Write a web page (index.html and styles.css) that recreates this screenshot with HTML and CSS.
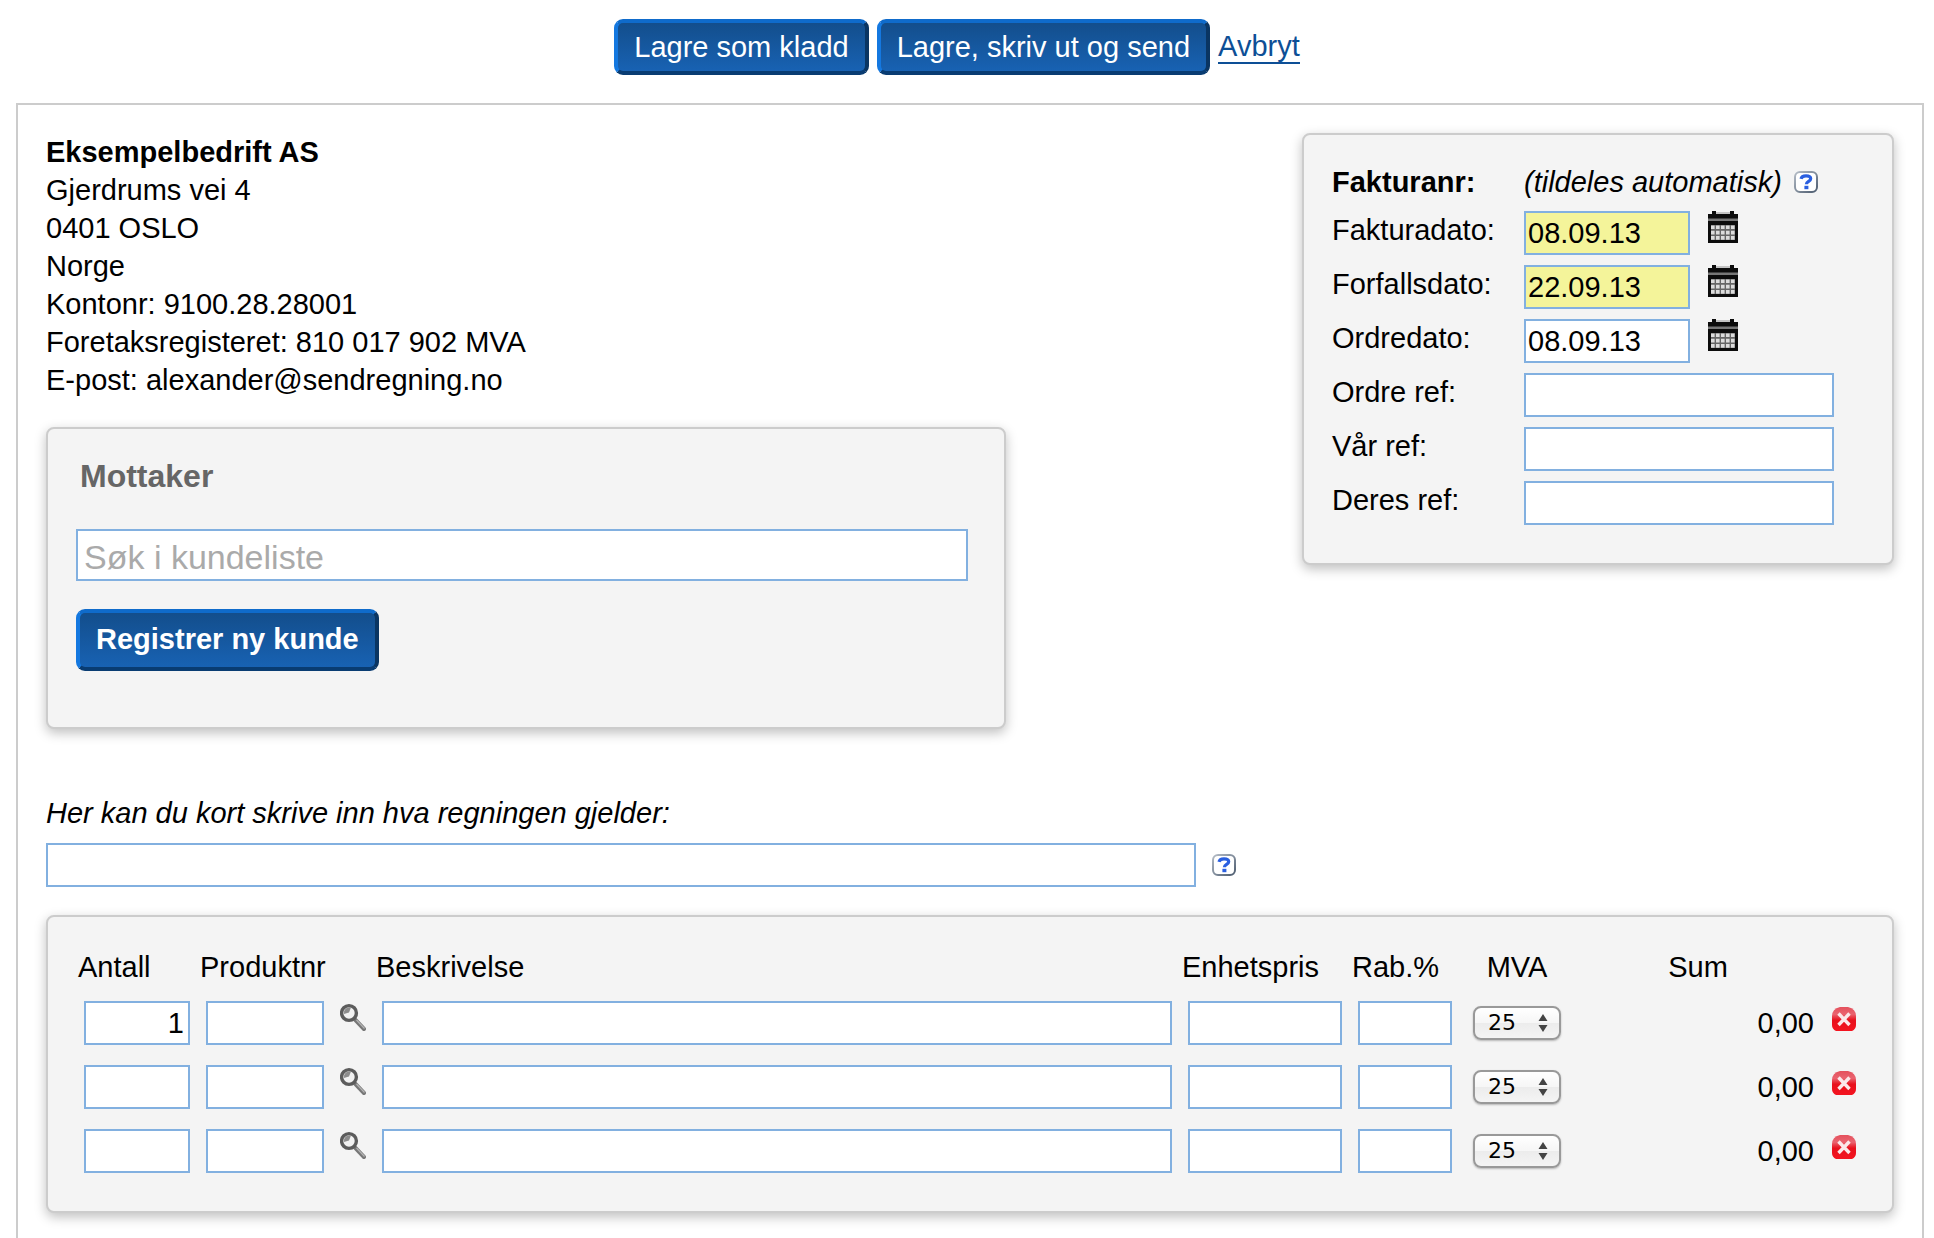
FILE: index.html
```html
<!DOCTYPE html>
<html lang="no">
<head>
<meta charset="utf-8">
<title>Ny faktura</title>
<link rel="stylesheet" href="styles.css">
</head>
<body>
<svg class="defs" width="0" height="0" aria-hidden="true">
  <defs>
    <linearGradient id="g-red" x1="0" y1="0" x2="0" y2="1">
      <stop offset="0" stop-color="#e4505c"/><stop offset=".3" stop-color="#ea6470"/><stop offset=".55" stop-color="#e8101c"/><stop offset="1" stop-color="#f41420"/>
    </linearGradient>
    <linearGradient id="g-help" x1="0" y1="0" x2="1" y2="1">
      <stop offset="0" stop-color="#b4bcc6"/><stop offset="1" stop-color="#4e5d70"/>
    </linearGradient>
    <symbol id="i-help" viewBox="0 0 24 22">
      <rect x="1" y="1" width="22" height="20" rx="5" fill="#fff" stroke="url(#g-help)" stroke-width="2"/>
      <path d="M7 7.800C7.500 5.400 9.500 4.800 12 4.800c2.800 0 4.700 1 4.700 3 0 2.700-4.300 2.500-4.300 5.400" fill="none" stroke="#2a5fe0" stroke-width="3.200"/>
      <rect x="10.400" y="14.800" width="4" height="3.400" fill="#2a5fe0"/>
    </symbol>
    <symbol id="i-cal" viewBox="0 0 30 32">
      <path d="M0 3h4V0h4v3h14V0h4v3h4v29H0z" fill="#0c0c0c"/>
      <path d="M8 1h14v2H8z" fill="#c4c4c4"/>
      <path d="M0 7.500h30v2.500H0z" fill="#777"/>
      <path d="M3 14h24v15H3z" fill="#666"/>
      <g fill="#dcdcdc"><path id="cal-row" d="M3 14.500h3.600v3.600H3zM8 14.500h3.600v3.600H8zM13 14.500h3.600v3.600H13zM18 14.500h3.600v3.600H18zM23 14.500h3.600v3.600H23z"/><use href="#cal-row" y="5.300"/><use href="#cal-row" y="10.600"/></g>
    </symbol>
    <symbol id="i-search" viewBox="0 0 26 28">
      <path d="M15 16.500l9 9.500" stroke="#777" stroke-width="4" stroke-linecap="round"/>
      <path d="M16.500 17l8 8.500" stroke="#b4b4b4" stroke-width="1.200"/>
      <circle cx="9" cy="10" r="7.400" fill="#f2f2f2" stroke="#5c5c5c" stroke-width="3.400"/>
      <path d="M4 11a5.500 5.500 0 0 1 7-6.500L9 9.500z" fill="#8c8c8c"/>
    </symbol>
    <symbol id="i-del" viewBox="0 0 24 24">
      <path d="M8 0h8q8 2 8 9v9q0 4-4 6H4q-4-2-4-6V9Q0 2 8 0z" fill="url(#g-red)"/>
      <path d="M6.500 6.500l11 11.500M17.500 6.500l-11 11.500" stroke="#fbe8ea" stroke-width="3.400"/>
    </symbol>
  </defs>
</svg>

<form class="invoice-form">
  <div class="toolbar">
    <button type="button" class="btn">Lagre som kladd</button>
    <button type="button" class="btn">Lagre, skriv ut og send</button>
    <a class="cancel" href="#">Avbryt</a>
  </div>

  <main class="invoice">
    <div class="top">
      <div class="sender-col">
        <address class="sender">
          <strong>Eksempelbedrift AS</strong><br>
          Gjerdrums vei 4<br>
          0401 OSLO<br>
          Norge<br>
          Kontonr: 9100.28.28001<br>
          Foretaksregisteret: 810 017 902 MVA<br>
          E-post: alexander@sendregning.no
        </address>
        <section class="panel recipient">
          <h2>Mottaker</h2>
          <input class="field search" type="text" placeholder="Søk i kundeliste" aria-label="Søk i kundeliste">
          <button type="button" class="btn btn-strong">Registrer ny kunde</button>
        </section>
      </div>

      <section class="panel details">
        <strong>Fakturanr:</strong>
        <div class="value"><em>(tildeles automatisk)</em><button type="button" class="icon-btn" aria-label="Hjelp"><svg width="24" height="22"><use href="#i-help"/></svg></button></div>
        <label for="fakturadato">Fakturadato:</label>
        <div class="value date"><input class="field required" id="fakturadato" type="text" value="08.09.13"><button type="button" class="icon-btn" aria-label="Velg dato"><svg width="30" height="32"><use href="#i-cal"/></svg></button></div>
        <label for="forfallsdato">Forfallsdato:</label>
        <div class="value date"><input class="field required" id="forfallsdato" type="text" value="22.09.13"><button type="button" class="icon-btn" aria-label="Velg dato"><svg width="30" height="32"><use href="#i-cal"/></svg></button></div>
        <label for="ordredato">Ordredato:</label>
        <div class="value date"><input class="field" id="ordredato" type="text" value="08.09.13"><button type="button" class="icon-btn" aria-label="Velg dato"><svg width="30" height="32"><use href="#i-cal"/></svg></button></div>
        <label for="ordreref">Ordre ref:</label>
        <input class="field ref" id="ordreref" type="text">
        <label for="varref">Vår ref:</label>
        <input class="field ref" id="varref" type="text">
        <label for="deresref">Deres ref:</label>
        <input class="field ref" id="deresref" type="text">
      </section>
    </div>

    <div class="subject">
      <label for="gjelder">Her kan du kort skrive inn hva regningen gjelder:</label>
      <div class="subject-row">
        <input class="field" id="gjelder" type="text">
        <button type="button" class="icon-btn" aria-label="Hjelp"><svg width="24" height="22"><use href="#i-help"/></svg></button>
      </div>
    </div>

    <section class="panel lines">
      <table>
        <colgroup>
          <col class="c-qty"><col class="c-prod"><col class="c-find"><col><col class="c-price"><col class="c-disc"><col class="c-vat"><col class="c-sum"><col class="c-del">
        </colgroup>
        <thead>
          <tr><th>Antall</th><th colspan="2">Produktnr</th><th>Beskrivelse</th><th>Enhetspris</th><th>Rab.%</th><th class="mid">MVA</th><th class="mid">Sum</th><th></th></tr>
        </thead>
        <tbody>
          <tr>
            <td><input class="field num" type="text" value="1" aria-label="Antall"></td>
            <td><input class="field" type="text" aria-label="Produktnr"></td>
            <td class="find"><button type="button" class="icon-btn" aria-label="Søk produkt"><svg width="26" height="28"><use href="#i-search"/></svg></button></td>
            <td><input class="field" type="text" aria-label="Beskrivelse"></td>
            <td><input class="field num" type="text" aria-label="Enhetspris"></td>
            <td><input class="field num" type="text" aria-label="Rabatt i prosent"></td>
            <td><span class="select"><select aria-label="MVA"><option>25</option></select><svg width="10" height="18"><path d="M5 0l4.500 7h-9zM5 18l4.500-7h-9z" fill="#444"/></svg></span></td>
            <td class="sum">0,00</td>
            <td class="del"><button type="button" class="icon-btn" aria-label="Slett linje"><svg width="24" height="24"><use href="#i-del"/></svg></button></td>
          </tr>
          <tr>
            <td><input class="field num" type="text" aria-label="Antall"></td>
            <td><input class="field" type="text" aria-label="Produktnr"></td>
            <td class="find"><button type="button" class="icon-btn" aria-label="Søk produkt"><svg width="26" height="28"><use href="#i-search"/></svg></button></td>
            <td><input class="field" type="text" aria-label="Beskrivelse"></td>
            <td><input class="field num" type="text" aria-label="Enhetspris"></td>
            <td><input class="field num" type="text" aria-label="Rabatt i prosent"></td>
            <td><span class="select"><select aria-label="MVA"><option>25</option></select><svg width="10" height="18"><path d="M5 0l4.500 7h-9zM5 18l4.500-7h-9z" fill="#444"/></svg></span></td>
            <td class="sum">0,00</td>
            <td class="del"><button type="button" class="icon-btn" aria-label="Slett linje"><svg width="24" height="24"><use href="#i-del"/></svg></button></td>
          </tr>
          <tr>
            <td><input class="field num" type="text" aria-label="Antall"></td>
            <td><input class="field" type="text" aria-label="Produktnr"></td>
            <td class="find"><button type="button" class="icon-btn" aria-label="Søk produkt"><svg width="26" height="28"><use href="#i-search"/></svg></button></td>
            <td><input class="field" type="text" aria-label="Beskrivelse"></td>
            <td><input class="field num" type="text" aria-label="Enhetspris"></td>
            <td><input class="field num" type="text" aria-label="Rabatt i prosent"></td>
            <td><span class="select"><select aria-label="MVA"><option>25</option></select><svg width="10" height="18"><path d="M5 0l4.500 7h-9zM5 18l4.500-7h-9z" fill="#444"/></svg></span></td>
            <td class="sum">0,00</td>
            <td class="del"><button type="button" class="icon-btn" aria-label="Slett linje"><svg width="24" height="24"><use href="#i-del"/></svg></button></td>
          </tr>
        </tbody>
      </table>
    </section>
  </main>
</form>
</body>
</html>
```
FILE: styles.css
```css
* {
  box-sizing: border-box;
}

html,
body {
  height: 100%;
}

body {
  margin: 0;
  background: #fff;
  color: #000;
  font-family: "Liberation Sans", Arial, sans-serif;
  font-size: 29px;
  line-height: 38px;
}

button,
input,
select {
  margin: 0;
  font: inherit;
}

.defs {
  display: block;
}

.invoice-form {
  display: flex;
  flex-direction: column;
  min-height: 100%;
}

/* Actions */

.toolbar {
  display: flex;
  justify-content: center;
  align-items: center;
  gap: 8px;
  padding: 19px 20px 28px 0;
}

.btn {
  padding: 5px 16px;
  border: 4px solid;
  border-color: #0f6bcb #0a3562 #093c72 #1478e0;
  border-radius: 9px;
  background: linear-gradient(#134e8c, #1862b3);
  color: #fff;
  white-space: nowrap;
}

.btn-strong {
  padding: 7px 16px 9px;
  font-weight: bold;
}

.cancel {
  border-bottom: 2px solid #0d4f96;
  color: #0d4f96;
  line-height: 32px;
  text-decoration: none;
}

.icon-btn {
  display: block;
  flex: none;
  padding: 0;
  border: 0;
  background: none;
}

.icon-btn svg {
  display: block;
}

/* Invoice sheet */

.invoice {
  flex: 1;
  margin: 0 10px 0 16px;
  padding: 28px 28px 26px;
  border: 2px solid #ccc;
  border-bottom: 0;
}

.panel {
  border: 2px solid #ccc;
  border-radius: 8px;
  background: #f4f4f4;
  box-shadow: 0 4px 12px rgba(0, 0, 0, 0.25);
}

.field {
  display: block;
  width: 100%;
  height: 44px;
  padding: 0 2px;
  border: 2px solid #82b0e0;
  border-radius: 0;
  background: #fff;
  color: #000;
}

.required {
  background: #f4f49a;
}

.num {
  padding-right: 4px;
  text-align: right;
}

.top {
  display: flex;
  justify-content: space-between;
  align-items: flex-start;
}

.sender-col {
  width: 960px;
}

.sender {
  margin-bottom: 28px;
  font-style: normal;
}

.recipient {
  padding: 28px 36px 56px 28px;
}

.recipient h2 {
  margin: 0 0 34px;
  padding-left: 4px;
  color: #666;
  font-size: 32px;
  line-height: 38px;
}

.search {
  height: 52px;
  margin-bottom: 28px;
  padding: 4px 6px 0;
  font-size: 34px;
}

.search::placeholder {
  color: #aaa;
}

.details {
  display: grid;
  grid-template-columns: 192px 1fr;
  row-gap: 10px;
  width: 592px;
  padding: 28px 28px 38px;
}

.value {
  display: flex;
  align-items: center;
  gap: 12px;
}

.date {
  align-items: flex-start;
  gap: 18px;
}

.date .field {
  width: 166px;
}

.ref {
  width: 310px;
}

.subject {
  margin: 65px 0 28px;
}

.subject label {
  display: block;
  margin-bottom: 11px;
  font-style: italic;
}

.subject-row {
  display: flex;
  align-items: center;
  gap: 16px;
}

.subject-row .field {
  width: 1150px;
}

/* Invoice lines */

.lines {
  padding: 31px 28px 28px 30px;
}

.lines table {
  width: 100%;
  border-collapse: collapse;
  table-layout: fixed;
}

.c-qty { width: 122px; }
.c-prod { width: 134px; }
.c-find { width: 42px; }
.c-price { width: 170px; }
.c-disc { width: 110px; }
.c-vat { width: 110px; }
.c-sum { width: 252px; }
.c-del { width: 40px; }

.lines th {
  height: 43px;
  padding: 0;
  font-weight: normal;
  text-align: left;
  vertical-align: top;
}

.lines td {
  height: 64px;
  padding: 0 10px 0 6px;
}

.lines .mid {
  text-align: center;
}

.lines .sum {
  text-align: right;
}

.lines .find {
  padding: 12px 0 0 6px;
  vertical-align: top;
}

.lines .del {
  padding: 16px 0 0 8px;
  vertical-align: top;
}

.select {
  display: grid;
  align-items: center;
  width: 88px;
  margin-left: 5px;
}

.select select,
.select svg {
  grid-area: 1 / 1;
}

.select select {
  height: 34px;
  padding: 0 13px;
  border: 2px solid #999;
  border-radius: 8px;
  background: linear-gradient(#fff, #f6f6f6 50%, #ececec 50%, #f4f4f4);
  box-shadow: 0 1px 2px rgba(0, 0, 0, 0.25);
  color: #000;
  font-family: "DejaVu Sans", sans-serif;
  font-size: 22px;
  line-height: 30px;
  appearance: none;
}

.select svg {
  justify-self: end;
  margin-right: 13px;
  pointer-events: none;
}
```
